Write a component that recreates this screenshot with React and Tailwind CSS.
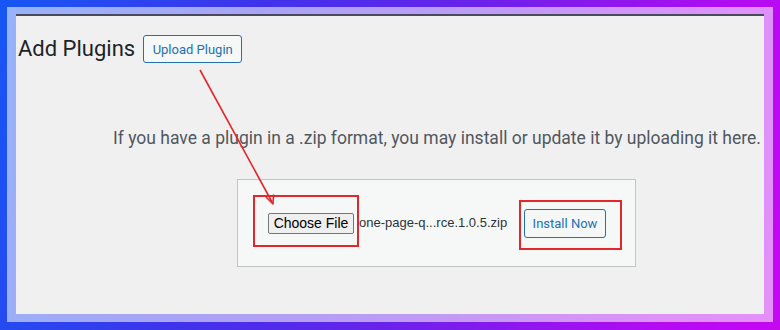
import React from "react";

export default function App() {
  return (
    <div className="relative w-[780px] h-[330px] overflow-hidden bg-[linear-gradient(105deg,#1657f4_0%,#3f33ea_30%,#6a22ea_55%,#b20cf1_85%,#c508f2_100%)] pt-[7px] pb-[8px] px-[7px]">
      <div className="h-full bg-white/55 pt-[7px] pb-[8px] pl-[9px] pr-[9px]">
        <div className="h-full bg-[#f0f0f1] border-t-2 border-[#4a4a5e] font-['Roboto',sans-serif]">
          <div className="flex items-center gap-[8px] pl-[2px] mt-[19px]">
            <h1 className="text-[22px] leading-[28px] text-[#1d2327] font-normal">Add Plugins</h1>
            <button className="h-[28px] w-[99px] border border-[#2271b1] rounded-[3px] bg-[#f6f7f7] text-[#2271b1] text-[13px] leading-none">
              Upload Plugin
            </button>
          </div>
          <div className="ml-[97px] mr-[4px]">
            <p className="mt-[63px] text-center text-[17.5px] leading-[24px] text-[#50575e] whitespace-nowrap">
              If you have a plugin in a .zip format, you may install or update it by uploading it here.
            </p>
            <div className="relative mx-auto mt-[29px] w-[399px] h-[88px] border border-[#c3c4c7] bg-[#f6f7f7] flex items-center pl-[30px] pr-[29px]">
              <button className="h-[21px] w-[86px] border border-[#767676] rounded-[2px] bg-[#efefef] text-[#000] text-[14px] leading-none font-['Liberation_Sans',Arial,sans-serif]">
                Choose File
              </button>
              <span className="ml-[5px] text-[13px] text-[#2c3338] font-['Liberation_Sans',Arial,sans-serif] whitespace-nowrap">
                one-page-q...rce.1.0.5.zip
              </span>
              <button className="ml-auto h-[29px] w-[82px] border border-[#2271b1] rounded-[3px] bg-[#f6f7f7] text-[#2271b1] text-[13px] leading-none">
                Install Now
              </button>
              <div className="absolute left-[15px] top-[15px] w-[106px] h-[52px] border-2 border-[#e3262b] pointer-events-none" />
              <div className="absolute left-[281px] top-[20px] w-[103px] h-[50px] border-2 border-[#e3262b] pointer-events-none" />
            </div>
          </div>
        </div>
      </div>
      <svg className="absolute left-0 top-0 pointer-events-none" width="780" height="330" viewBox="0 0 780 330">
        <line x1="200" y1="70" x2="272" y2="202" stroke="#e3262b" strokeWidth="1.6" />
        <path d="M266.5 197.5 L273 204 L273.5 195" fill="none" stroke="#e3262b" strokeWidth="1.6" strokeLinecap="round" strokeLinejoin="round" />
      </svg>
    </div>
  );
}
